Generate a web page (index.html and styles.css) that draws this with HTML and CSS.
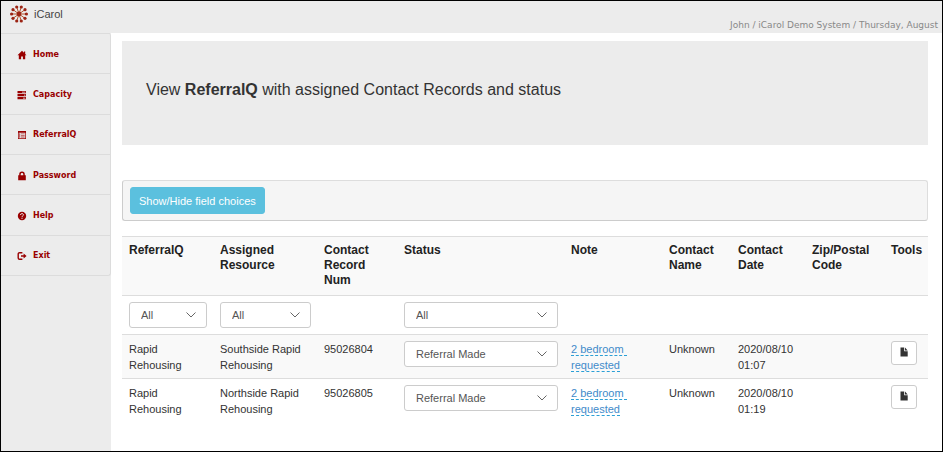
FILE: index.html
```html
<!DOCTYPE html>
<html lang="en">
<head>
    <meta charset="UTF-8">
    <meta name="viewport" content="width=device-width, initial-scale=1.0">
    <title>iCarol - ReferralQ</title>
    <link rel="stylesheet" href="styles.css">
</head>
<body>
    <header class="topbar">
        <div class="brand">
            <svg class="logo" viewBox="0 0 18 18">
                <g stroke="#b5552f" stroke-width="1">
                    <path d="M9 9L6.8 2.2M9 9L11.2 2.2M9 9L14.8 4.8M9 9H16.2M9 9L14.8 13.2M9 9L11.2 15.8M9 9L6.8 15.8M9 9L3.2 13.2M9 9H1.8M9 9L3.2 4.8"/>
                </g>
                <g fill="#9c2414">
                    <circle cx="9" cy="9" r="2.4"/>
                    <circle cx="6.7" cy="2" r="1.6"/>
                    <circle cx="11.3" cy="2" r="1.6"/>
                    <circle cx="15" cy="4.7" r="1.6"/>
                    <circle cx="16.4" cy="9" r="1.6"/>
                    <circle cx="15" cy="13.3" r="1.6"/>
                    <circle cx="11.3" cy="16" r="1.6"/>
                    <circle cx="6.7" cy="16" r="1.6"/>
                    <circle cx="3" cy="13.3" r="1.6"/>
                    <circle cx="1.6" cy="9" r="1.6"/>
                    <circle cx="3" cy="4.7" r="1.6"/>
                </g>
            </svg>
            <span>iCarol</span>
        </div>
        <div class="user-info">John / iCarol Demo System / Thursday, August</div>
    </header>

    <div class="page">
        <nav class="sidebar">
            <ul class="menu">
                <li><a href="#">
                    <svg viewBox="0 0 10 10"><path d="M5 .7L.5 5.2H1.8V9.2H4.1V6.4H5.9V9.2H8.2V5.2H9.5L8.2 3.9V1.4H7V2.7Z"/></svg>
                    Home</a></li>
                <li><a href="#">
                    <svg viewBox="0 0 10 10"><path d="M.5 1H9V3.2H.5ZM.5 4H9V6.2H.5ZM.5 7H9V9.2H.5Z"/><path class="cut" d="M5 1.8H8.4V2.4H5ZM7 4.8H8.4V5.4H7ZM6 7.8H8.4V8.4H6Z"/></svg>
                    Capacity</a></li>
                <li><a href="#">
                    <svg viewBox="0 0 10 10"><path fill-rule="evenodd" d="M1 1H9V9H1ZM1.7 2.7V8.3H8.3V2.7Z"/><path d="M2.2 3.2H3.2V7.8H2.2Z" opacity=".7"/><path d="M4 3.4H7.7V4.2H4ZM4 5H7.7V5.8H4ZM4 6.6H7.7V7.4H4Z" opacity=".7"/></svg>
                    ReferralQ</a></li>
                <li><a href="#">
                    <svg viewBox="0 0 10 10"><path fill-rule="evenodd" d="M1.2 4.2H2.2V3.4A2.8 2.8 0 0 1 7.8 3.4V4.2H8.8V9.2H1.2ZM3.7 4.2H6.3V3.4A1.3 1.3 0 0 0 3.7 3.4Z"/></svg>
                    Password</a></li>
                <li><a href="#">
                    <svg viewBox="0 0 10 10"><circle cx="5" cy="5" r="4.2"/><path class="cut-line" d="M3.6 4A1.4 1.3 0 1 1 5.6 5Q5 5.3 5 6"/><path class="cut" d="M4.4 6.7H5.6V7.8H4.4Z"/></svg>
                    Help</a></li>
                <li><a href="#">
                    <svg viewBox="0 0 10 10"><path class="line" d="M5.4 1.7H2.6A1.4 1.4 0 0 0 1.2 3.1V6.9A1.4 1.4 0 0 0 2.6 8.3H5.4"/><path d="M4 4.3H6.6V2.5L9.6 5L6.6 7.5V5.7H4Z"/></svg>
                    Exit</a></li>
            </ul>
        </nav>

        <main class="content">
            <section class="banner">
                <h1>View <strong>ReferralQ</strong> with assigned Contact Records and status</h1>
            </section>

            <div class="well">
                <button type="button" class="btn-info">Show/Hide field choices</button>
            </div>

            <table class="records">
                <colgroup>
                    <col class="col-referral">
                    <col class="col-resource">
                    <col class="col-number">
                    <col class="col-status">
                    <col class="col-note">
                    <col class="col-name">
                    <col class="col-date">
                    <col class="col-zip">
                    <col class="col-tools">
                </colgroup>
                <thead>
                    <tr>
                        <th>ReferralQ</th>
                        <th>Assigned Resource</th>
                        <th>Contact Record Num</th>
                        <th>Status</th>
                        <th>Note</th>
                        <th>Contact Name</th>
                        <th>Contact Date</th>
                        <th>Zip/Postal Code</th>
                        <th>Tools</th>
                    </tr>
                </thead>
                <tbody>
                    <tr class="filters">
                        <td><div class="select"><select aria-label="Filter by ReferralQ"><option>All</option></select><svg viewBox="0 0 10 6"><path d="M.5 .5L5 5L9.5 .5"/></svg></div></td>
                        <td><div class="select"><select aria-label="Filter by assigned resource"><option>All</option></select><svg viewBox="0 0 10 6"><path d="M.5 .5L5 5L9.5 .5"/></svg></div></td>
                        <td></td>
                        <td><div class="select"><select aria-label="Filter by status"><option>All</option></select><svg viewBox="0 0 10 6"><path d="M.5 .5L5 5L9.5 .5"/></svg></div></td>
                        <td></td>
                        <td></td>
                        <td></td>
                        <td></td>
                        <td></td>
                    </tr>
                    <tr class="striped">
                        <td>Rapid Rehousing</td>
                        <td>Southside Rapid Rehousing</td>
                        <td>95026804</td>
                        <td><div class="select"><select aria-label="Status of 95026804"><option>Referral Made</option></select><svg viewBox="0 0 10 6"><path d="M.5 .5L5 5L9.5 .5"/></svg></div></td>
                        <td><a class="note" href="#">2 bedroom&nbsp;<br>requested</a></td>
                        <td>Unknown</td>
                        <td>2020/08/10 01:07</td>
                        <td></td>
                        <td><button type="button" class="btn-tool" aria-label="Open record 95026804"><svg viewBox="0 0 10 10"><path d="M1.5 .5H5.2V4.2H8.7V9.5H1.5ZM6 .5L8.7 3.4H6Z"/></svg></button></td>
                    </tr>
                    <tr>
                        <td>Rapid Rehousing</td>
                        <td>Northside Rapid Rehousing</td>
                        <td>95026805</td>
                        <td><div class="select"><select aria-label="Status of 95026805"><option>Referral Made</option></select><svg viewBox="0 0 10 6"><path d="M.5 .5L5 5L9.5 .5"/></svg></div></td>
                        <td><a class="note" href="#">2 bedroom&nbsp;<br>requested</a></td>
                        <td>Unknown</td>
                        <td>2020/08/10 01:19</td>
                        <td></td>
                        <td><button type="button" class="btn-tool" aria-label="Open record 95026805"><svg viewBox="0 0 10 10"><path d="M1.5 .5H5.2V4.2H8.7V9.5H1.5ZM6 .5L8.7 3.4H6Z"/></svg></button></td>
                    </tr>
                </tbody>
            </table>
        </main>
    </div>
</body>
</html>
```

FILE: styles.css
```css
* {
    box-sizing: border-box;
}
body {
    margin: 0;
    min-height: 100vh;
    display: flex;
    flex-direction: column;
    border: 1px solid #000;
    background: #fff;
    color: #333;
    font-family: "Liberation Sans", Arial, sans-serif;
    font-size: 11px;
    line-height: 16px;
}

/* top bar */
.topbar {
    display: flex;
    justify-content: space-between;
    height: 32px;
    padding: 0 4px 0 9px;
    background: #ececec;
}
.brand {
    display: flex;
    align-items: center;
    gap: 6px;
    height: 26px;
    color: #444;
}
.logo {
    width: 18px;
    height: 18px;
}
.user-info {
    align-self: flex-end;
    color: #888;
    font-family: "DejaVu Sans", Verdana, sans-serif;
    font-size: 9px;
    line-height: 15px;
    white-space: nowrap;
}

/* side menu */
.page {
    flex: 1;
    display: flex;
}
.sidebar {
    flex: none;
    width: 110px;
    background: #ececec;
}
.menu {
    display: grid;
    grid-auto-rows: 1fr;
    height: 243px;
    margin: 0;
    padding: 0;
    list-style: none;
    border: 1px solid #dcdcdc;
    border-width: 0 1px 1px 0;
    border-radius: 0 3px 3px 0;
}
.menu li {
    border-top: 1px solid #dcdcdc;
}
.menu a {
    display: flex;
    align-items: center;
    gap: 6px;
    height: 100%;
    padding: 2px 0 0 16px;
    color: #990000;
    font-family: "DejaVu Sans", Verdana, sans-serif;
    font-size: 8px;
    font-weight: bold;
    text-decoration: none;
}
.menu svg {
    width: 10px;
    height: 10px;
    fill: #990000;
}
.menu .cut {
    fill: #ececec;
}
.menu .cut-line {
    fill: none;
    stroke: #ececec;
}
.menu .line {
    fill: none;
    stroke: #990000;
    stroke-width: 1.4;
}

/* content */
.content {
    flex: 1;
    min-width: 0;
    padding: 8px 14px 8px 11px;
}
.banner {
    display: flex;
    align-items: center;
    height: 104px;
    padding: 0 24px 6px;
    background: #ececec;
}
.banner h1 {
    margin: 0;
    font-size: 16px;
    font-weight: normal;
    line-height: 20px;
}
.well {
    display: flex;
    margin: 35px 0 15px;
    padding: 6px 7px;
    border: 1px solid #ddd;
    border-bottom-color: #ccc;
    border-left-color: #ccc;
    border-radius: 3px;
    background: #f5f5f5;
}
.btn-info {
    height: 27px;
    padding: 0 8px;
    border: 1px solid #5bc0de;
    border-radius: 3px;
    background: #5bc0de;
    color: #fff;
    font: inherit;
}

/* records table */
.records {
    width: 100%;
    table-layout: fixed;
    border-spacing: 0;
}
.records th,
.records td {
    padding: 6px 6px 5px 7px;
    border-top: 1px solid #ddd;
    text-align: left;
    vertical-align: top;
}
.records th {
    padding-bottom: 7px;
    color: #222;
    font-size: 12px;
    line-height: 15px;
    background: #f9f9f9;
}
.records .filters td {
    padding-bottom: 6px;
}
.records .striped td {
    background: #f9f9f9;
}
.col-referral { width: 91px; }
.col-resource { width: 104px; }
.col-number { width: 80px; }
.col-note { width: 98px; }
.col-name { width: 69px; }
.col-date { width: 74px; }
.col-zip { width: 79px; }
.col-tools { width: 44px; }

.select {
    position: relative;
}
.select select {
    display: block;
    width: 100%;
    height: 26px;
    padding: 0 24px 0 11px;
    appearance: none;
    border: 1px solid #ccc;
    border-radius: 3px;
    background: #fff;
    color: #555;
    font: inherit;
}
.select svg {
    position: absolute;
    top: 10px;
    right: 11px;
    width: 10px;
    height: 6px;
    fill: none;
    stroke: #666;
    pointer-events: none;
}
.note {
    border-bottom: 1px dashed #2a9fd6;
    color: #428bca;
    text-decoration: none;
}
.btn-tool {
    display: flex;
    align-items: center;
    justify-content: center;
    width: 26px;
    height: 24px;
    padding: 0 0 2px;
    border: 1px solid #ccc;
    border-radius: 3px;
    background: #fff;
}
.btn-tool svg {
    width: 10px;
    height: 10px;
    fill: #333;
}
```
